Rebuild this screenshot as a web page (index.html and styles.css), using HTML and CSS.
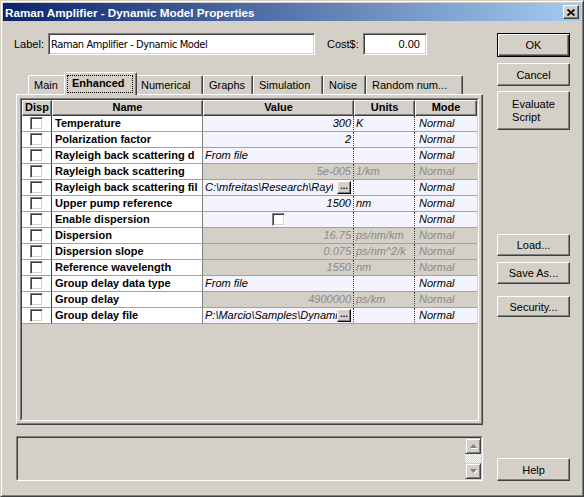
FILE: index.html
```html
<!DOCTYPE html>
<html lang="en">

<head>
    <meta charset="UTF-8">
    <meta name="viewport" content="width=device-width, initial-scale=1.0">
    <title>Raman Amplifier - Dynamic Model Properties</title>
    <link rel="stylesheet" href="styles.css">
</head>

<body>
    <div class="window">
        <div class="titlebar">
            <span class="title">Raman Amplifier - Dynamic Model Properties</span>
            <span class="close">
                <svg width="8" height="7" viewBox="0 0 8 7">
                    <path d="M0.5 0.5L7.5 6.5M7.5 0.5L0.5 6.5" stroke="#000" stroke-width="1.7" fill="none" />
                </svg>
            </span>
        </div>

        <div class="dialog">
            <div class="main">
                <div class="label-row">
                    <span class="lbl">Label:</span>
                    <div class="field field-label">Raman Amplifier - Dynamic Model</div>
                    <span class="lbl lbl-cost">Cost$:</span>
                    <div class="field field-cost">0.00</div>
                </div>

                <div class="tabs">
                    <div class="tab tab-main">Main</div>
                    <div class="tab tab-enhanced active"><span class="focus">Enhanced</span></div>
                    <div class="tab tab-numerical">Numerical</div>
                    <div class="tab tab-graphs">Graphs</div>
                    <div class="tab tab-simulation">Simulation</div>
                    <div class="tab tab-noise">Noise</div>
                    <div class="tab tab-random">Random num...</div>
                </div>

                <div class="panel">
                    <div class="grid">
                        <div class="grid-inner">
                            <div class="row head">
                                <div class="hcell">Disp</div>
                                <div class="hcell">Name</div>
                                <div class="hcell">Value</div>
                                <div class="hcell">Units</div>
                                <div class="hcell">Mode</div>
                            </div>
                            <div class="row">
                                <div class="cell disp"><span class="check"></span></div>
                                <div class="cell name">Temperature</div>
                                <div class="cell value num">300</div>
                                <div class="cell units">K</div>
                                <div class="cell mode">Normal</div>
                            </div>
                            <div class="row">
                                <div class="cell disp"><span class="check"></span></div>
                                <div class="cell name">Polarization factor</div>
                                <div class="cell value num">2</div>
                                <div class="cell units"></div>
                                <div class="cell mode">Normal</div>
                            </div>
                            <div class="row">
                                <div class="cell disp"><span class="check"></span></div>
                                <div class="cell name">Rayleigh back scattering d</div>
                                <div class="cell value">From file</div>
                                <div class="cell units"></div>
                                <div class="cell mode">Normal</div>
                            </div>
                            <div class="row off">
                                <div class="cell disp"><span class="check"></span></div>
                                <div class="cell name">Rayleigh back scattering</div>
                                <div class="cell value num">5e-005</div>
                                <div class="cell units">1/km</div>
                                <div class="cell mode">Normal</div>
                            </div>
                            <div class="row">
                                <div class="cell disp"><span class="check"></span></div>
                                <div class="cell name">Rayleigh back scattering fil</div>
                                <div class="cell value file"><span class="path">C:\mfreitas\Research\Rayl</span><span class="dots">...</span></div>
                                <div class="cell units"></div>
                                <div class="cell mode">Normal</div>
                            </div>
                            <div class="row">
                                <div class="cell disp"><span class="check"></span></div>
                                <div class="cell name">Upper pump reference</div>
                                <div class="cell value num">1500</div>
                                <div class="cell units">nm</div>
                                <div class="cell mode">Normal</div>
                            </div>
                            <div class="row">
                                <div class="cell disp"><span class="check"></span></div>
                                <div class="cell name">Enable dispersion</div>
                                <div class="cell value center"><span class="check"></span></div>
                                <div class="cell units"></div>
                                <div class="cell mode">Normal</div>
                            </div>
                            <div class="row off">
                                <div class="cell disp"><span class="check"></span></div>
                                <div class="cell name">Dispersion</div>
                                <div class="cell value num">16.75</div>
                                <div class="cell units">ps/nm/km</div>
                                <div class="cell mode">Normal</div>
                            </div>
                            <div class="row off">
                                <div class="cell disp"><span class="check"></span></div>
                                <div class="cell name">Dispersion slope</div>
                                <div class="cell value num">0.075</div>
                                <div class="cell units">ps/nm^2/k</div>
                                <div class="cell mode">Normal</div>
                            </div>
                            <div class="row off">
                                <div class="cell disp"><span class="check"></span></div>
                                <div class="cell name">Reference wavelength</div>
                                <div class="cell value num">1550</div>
                                <div class="cell units">nm</div>
                                <div class="cell mode">Normal</div>
                            </div>
                            <div class="row">
                                <div class="cell disp"><span class="check"></span></div>
                                <div class="cell name">Group delay data type</div>
                                <div class="cell value">From file</div>
                                <div class="cell units"></div>
                                <div class="cell mode">Normal</div>
                            </div>
                            <div class="row off">
                                <div class="cell disp"><span class="check"></span></div>
                                <div class="cell name">Group delay</div>
                                <div class="cell value num">4900000</div>
                                <div class="cell units">ps/km</div>
                                <div class="cell mode">Normal</div>
                            </div>
                            <div class="row">
                                <div class="cell disp"><span class="check"></span></div>
                                <div class="cell name">Group delay file</div>
                                <div class="cell value file"><span class="path">P:\Marcio\Samples\Dynami</span><span class="dots">...</span></div>
                                <div class="cell units"></div>
                                <div class="cell mode">Normal</div>
                            </div>
                        </div>
                    </div>
                </div>

                <div class="messages">
                    <div class="messages-inner">
                        <div class="vscroll">
                            <span class="sbtn">
                                <svg width="7" height="5" viewBox="0 0 7 5">
                                    <path d="M4.5 1L8 5H1z" fill="#fff" />
                                    <path d="M3.5 0L7 4H0z" fill="#808080" />
                                </svg>
                            </span>
                            <span class="track"></span>
                            <span class="sbtn">
                                <svg width="7" height="5" viewBox="0 0 7 5">
                                    <path d="M1 1H8L4.5 5z" fill="#fff" />
                                    <path d="M0 0H7L3.5 4z" fill="#808080" />
                                </svg>
                            </span>
                        </div>
                    </div>
                </div>
            </div>

            <div class="side">
                <div class="btn btn-default">OK</div>
                <div class="btn btn-cancel">Cancel</div>
                <div class="btn btn-eval"><span class="two-line">Evaluate<br>Script</span></div>
                <div class="btn btn-load">Load...</div>
                <div class="btn btn-save">Save As...</div>
                <div class="btn btn-security">Security...</div>
                <div class="btn btn-help">Help</div>
            </div>
        </div>
    </div>
</body>

</html>
```

FILE: styles.css
```css
* {
    box-sizing: border-box;
}

body {
    margin: 0;
    font: 11px "Liberation Sans", Arial, sans-serif;
    color: #000;
    background: #d4d0c8;
}

.window {
    width: 584px;
    height: 497px;
    padding: 2px;
    background: #d4d0c8;
    border: 1px solid;
    border-color: #d4d0c8 #404040 #404040 #d4d0c8;
    box-shadow: inset 1px 1px #fff, inset -1px -1px #808080;
}

/* title bar */
.titlebar {
    display: flex;
    align-items: center;
    justify-content: space-between;
    height: 18px;
    padding: 0 2px 0 2px;
    background: linear-gradient(to right, #0a246a, #a6caf0);
}

.title {
    color: #fff;
    font-size: 11.7px;
    font-weight: bold;
}

.close {
    display: flex;
    align-items: center;
    justify-content: center;
    width: 16px;
    height: 14px;
    background: #d4d0c8;
    border: 1px solid;
    border-color: #fff #404040 #404040 #fff;
    box-shadow: inset -1px -1px #808080;
}

/* body */
.dialog {
    display: flex;
    gap: 14px;
    padding: 12px 11px 0 11px;
}

.main {
    width: 469px;
}

.label-row {
    display: flex;
    align-items: center;
    height: 22px;
}

.lbl {
    width: 34px;
}

.lbl-cost {
    width: 36px;
    margin-left: 12px;
}

.field {
    display: flex;
    align-items: center;
    height: 22px;
    padding: 0 6px 0 2px;
    background: #fff;
    border: 1px solid;
    border-color: #808080 #fff #fff #808080;
    box-shadow: inset 1px 1px #404040, inset -1px -1px #d4d0c8;
    white-space: nowrap;
}

.field-label {
    width: 267px;
    font-family: "DejaVu Sans Condensed", "Liberation Sans", sans-serif;
    letter-spacing: -0.4px;
}

.field-cost {
    width: 64px;
    justify-content: flex-end;
}

/* tabs */
.tabs {
    display: flex;
    align-items: flex-end;
    height: 22px;
    margin-top: 17px;
    padding-left: 14px;
}

.tab {
    height: 19px;
    padding: 3px 0 0 5px;
    border: 1px solid;
    border-bottom: 0;
    border-color: #fff #404040 transparent #fff;
    border-radius: 2px 2px 0 0;
    box-shadow: inset -1px 0 #808080;
    white-space: nowrap;
    background: #d4d0c8;
}

.tab.active {
    position: relative;
    z-index: 1;
    height: 23px;
    margin: 0 -2px -1px -2px;
    padding: 2px 0 0 2px;
    font-weight: bold;
}

.focus {
    display: inline-block;
    width: 66px;
    height: 18px;
    padding: 2px 0 0 5px;
    outline: 1px dotted #000;
    outline-offset: -1px;
}

.tab-main { width: 38px; }
.tab-enhanced { width: 73px; }
.tab-numerical { width: 68px; }
.tab-graphs { width: 50px; }
.tab-simulation { width: 70px; }
.tab-noise { width: 43px; }
.tab-random { width: 97px; }

.panel {
    height: 331px;
    margin-left: 2px;
    padding: 3px;
    border: 1px solid;
    border-color: #fff #404040 #404040 #fff;
    box-shadow: inset -1px -1px #808080;
}

/* property grid */
.grid {
    height: 100%;
    border: 1px solid;
    border-color: #808080 #fff #fff #808080;
}

.grid-inner {
    height: 100%;
    overflow: hidden;
    background: #d4d0c8;
    border: 1px solid;
    border-color: #404040 #d4d0c8 #d4d0c8 #404040;
}

.row {
    display: grid;
    grid-template-columns: 30px 151px 151px 61px 62px;
    height: 16px;
}

.hcell {
    font-weight: bold;
    text-align: center;
    line-height: 13px;
    border: 1px solid;
    border-color: #fff #404040 #404040 #fff;
    box-shadow: inset -1px -1px #808080;
}

.cell {
    height: 16px;
    padding: 0 2px;
    line-height: 15px;
    white-space: nowrap;
    overflow: hidden;
    border-bottom: 1px solid #a0a0a8;
}

.disp {
    display: flex;
    align-items: center;
    justify-content: center;
    background: #fff;
    border-right: 1px solid #404040;
}

.name {
    padding-left: 3px;
    font-weight: bold;
    background: #fff;
    border-right: 1px solid #808080;
}

.value,
.units,
.mode {
    font-style: italic;
    background: #f4f4fd;
}

.value,
.units {
    border-right: 1px dotted #404040;
}

.num {
    text-align: right;
}

.center {
    display: flex;
    align-items: center;
    justify-content: center;
}

.mode {
    padding-left: 4px;
}

.row.off .value,
.row.off .units,
.row.off .mode {
    color: #8a8a8a;
    background: #d4d0c8;
}

.check {
    width: 13px;
    height: 13px;
    background: #fff;
    border: 1px solid;
    border-color: #808080 #fff #fff #808080;
    box-shadow: inset 1px 1px #404040, inset -1px -1px #d4d0c8;
}

.file {
    display: flex;
    align-items: center;
    justify-content: space-between;
}

.path {
    overflow: hidden;
}

.dots {
    flex: none;
    width: 14px;
    height: 13px;
    font: bold 9px "Liberation Sans", Arial, sans-serif;
    line-height: 8px;
    text-align: center;
    background: #d4d0c8;
    border: 1px solid;
    border-color: #fff #000 #000 #fff;
    box-shadow: inset -1px -1px #808080;
}

/* message box */
.messages {
    height: 45px;
    margin-top: 11px;
    margin-left: 2px;
    border: 1px solid;
    border-color: #808080 #fff #fff #808080;
}

.messages-inner {
    display: flex;
    justify-content: flex-end;
    height: 100%;
    border: 1px solid;
    border-color: #404040 #d4d0c8 #d4d0c8 #404040;
}

.vscroll {
    display: flex;
    flex-direction: column;
    width: 16px;
}

.sbtn {
    display: flex;
    align-items: center;
    justify-content: center;
    height: 16px;
    background: #d4d0c8;
    border: 1px solid;
    border-color: #d4d0c8 #404040 #404040 #d4d0c8;
    box-shadow: inset 1px 1px #fff, inset -1px -1px #808080;
}

.track {
    flex: 1;
    background: repeating-conic-gradient(#fff 0 25%, #d4d0c8 0 50%) 0 0 / 2px 2px;
}

/* buttons on the right */
.side {
    display: flex;
    flex-direction: column;
    width: 73px;
}

.btn {
    display: flex;
    align-items: center;
    justify-content: center;
    height: 22px;
    background: #d4d0c8;
    border: 1px solid;
    border-color: #fff #404040 #404040 #fff;
    box-shadow: inset -1px -1px #808080;
}

.btn-default {
    height: 24px;
    border-color: #000;
    box-shadow: inset 1px 1px #fff, inset -1px -1px #404040, inset -2px -2px #808080;
}

.btn-cancel {
    height: 23px;
    margin-top: 6px;
}

.btn-eval {
    height: 39px;
    margin-top: 5px;
}

.two-line {
    line-height: 13px;
    text-align: left;
}

.btn-load {
    margin-top: 104px;
}

.btn-save {
    margin-top: 6px;
}

.btn-security {
    height: 21px;
    margin-top: 12px;
}

.btn-help {
    height: 23px;
    margin-top: auto;
}
```
